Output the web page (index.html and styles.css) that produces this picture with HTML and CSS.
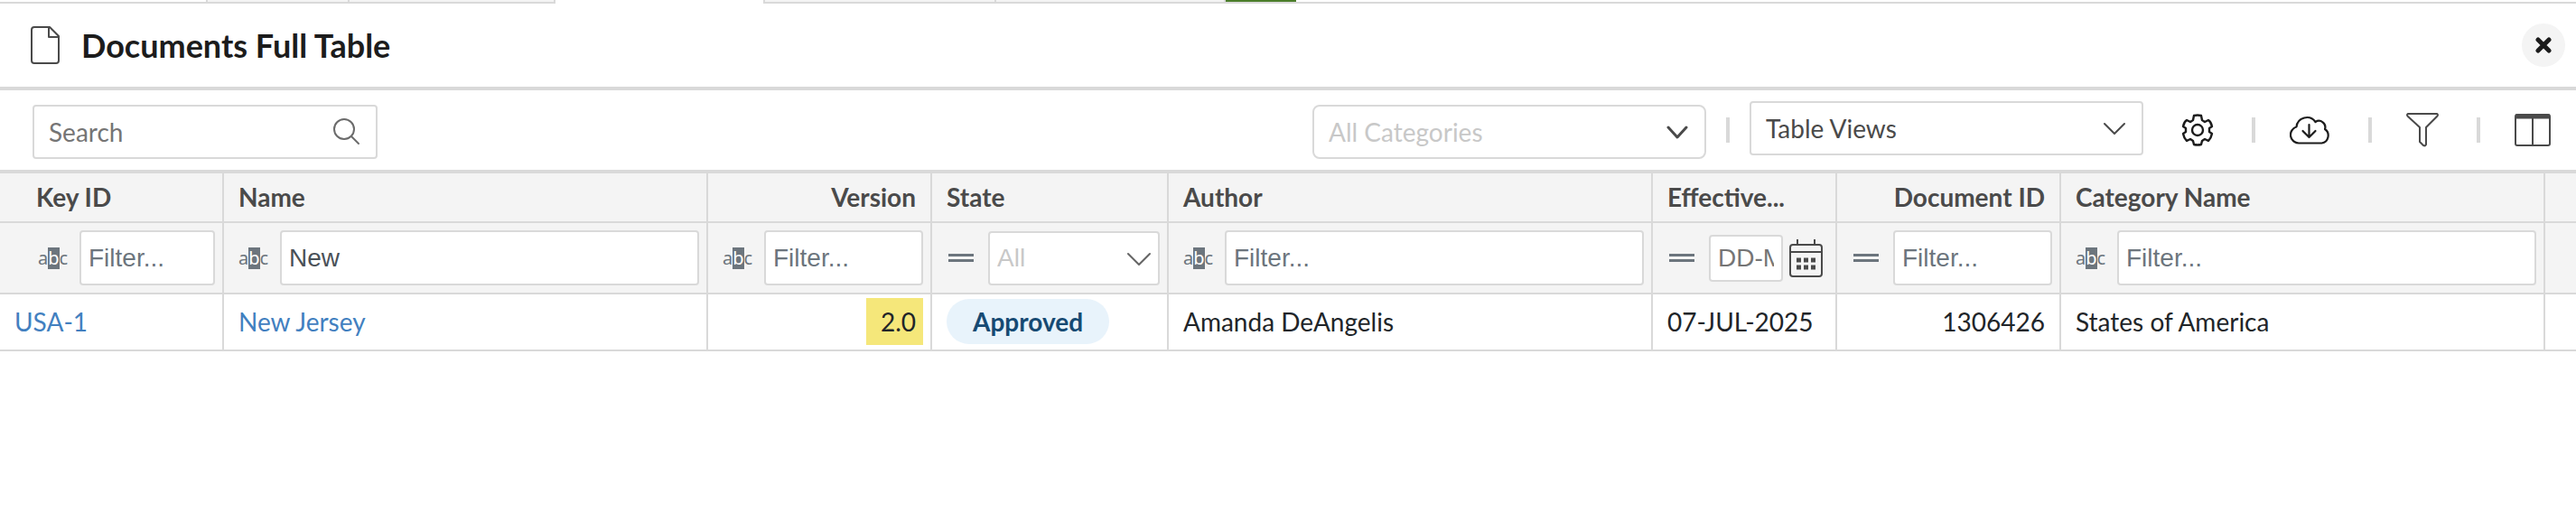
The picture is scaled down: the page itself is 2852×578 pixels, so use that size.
FILE: index.html
```html
<!DOCTYPE html>
<html lang="en">
<head>
  <meta charset="UTF-8">
  <title>Documents Full Table</title>
  <meta name="viewport" content="width=device-width, initial-scale=1.0">
  <link rel="stylesheet" href="styles.css">
</head>
<body>

  <!-- Bottom edge of the tab strip -->
  <div class="tab-strip">
    <div class="tab-gap tab-gap-start"></div>
    <div class="tab tab-sm"></div>
    <div class="tab tab-md tab-last"></div>
    <div class="tab-active"></div>
    <div class="tab tab-lg"></div>
    <div class="tab tab-lg tab-last"></div>
    <div class="tab-add"></div>
    <div class="tab-gap tab-gap-end"></div>
  </div>

  <!-- Page header -->
  <header class="page-header">
    <svg class="doc-icon" width="32" height="42" viewBox="0 0 32 42" fill="none" stroke="#4a4a4a" stroke-width="2" stroke-linejoin="round">
      <path d="M4 1H21L31 11V38Q31 41 28 41H4Q1 41 1 38V4Q1 1 4 1Z"/>
      <path d="M20 1V12H31"/>
    </svg>
    <h1>Documents Full Table</h1>
    <button class="close-btn" aria-label="Close">
      <svg width="18" height="18" viewBox="0 0 18 18" stroke="#1c1c1c" stroke-width="5" stroke-linecap="round">
        <path d="M3 3L15 15M15 3L3 15"/>
      </svg>
    </button>
  </header>

  <!-- Toolbar -->
  <div class="toolbar">
    <div class="search">
      <input type="text" placeholder="Search" aria-label="Search">
      <svg width="30" height="30" viewBox="0 0 30 30" fill="none" stroke="#6b6b6b" stroke-width="2" stroke-linecap="round">
        <circle cx="12" cy="12" r="11"/>
        <path d="M20 20L28 28"/>
      </svg>
    </div>

    <div class="views">
      <div class="select-wrap category-select">
        <select aria-label="Category">
          <option>All Categories</option>
        </select>
        <svg width="24" height="15" viewBox="0 0 24 15" fill="none" stroke="#4a4a4a" stroke-width="3" stroke-linecap="round" stroke-linejoin="round">
          <path d="M2 2L12 13L22 2"/>
        </svg>
      </div>
      <span class="sep"></span>
      <div class="select-wrap view-select">
        <select aria-label="Table view">
          <option>Table Views</option>
        </select>
        <svg width="24" height="15" viewBox="0 0 24 15" fill="none" stroke="#4a4a4a" stroke-width="2" stroke-linecap="round" stroke-linejoin="round">
          <path d="M1 2L12 13L23 2"/>
        </svg>
      </div>
    </div>

    <div class="actions">
      <button class="icon-btn settings-btn" aria-label="Settings">
        <svg width="36" height="36" viewBox="0 0 36 36" fill="none" stroke="#1c1c1c" stroke-width="2.4" stroke-linejoin="round">
          <path d="M14 2Q18 1 22 2L23 7L26 9L30 7Q33 9 34 14L31 16V20L34 22Q33 27 30 30L26 28L23 30L22 34Q18 35 14 34L13 30L10 28L6 30Q3 27 2 22L5 20V16L2 14Q3 9 6 7L10 9L13 7Z"/>
          <circle cx="18" cy="18" r="6"/>
        </svg>
      </button>
      <span class="sep"></span>
      <button class="icon-btn download-btn" aria-label="Download">
        <svg width="45" height="32" viewBox="0 0 45 32" fill="none" stroke="#1c1c1c" stroke-width="2.2" stroke-linecap="round" stroke-linejoin="round">
          <path d="M10 30.5A9.2 9.2 0 0 1 7.5 12.5A11.6 11.6 0 0 1 28.5 7A7 7 0 0 1 39 15A8.6 8.6 0 0 1 35.5 30.5Z"/>
          <path d="M21.5 10V24M14.5 17L21.5 24L28.5 17"/>
        </svg>
      </button>
      <span class="sep"></span>
      <button class="icon-btn filter-btn" aria-label="Filter">
        <svg width="36" height="38" viewBox="0 0 36 38" fill="none" stroke="#4a4a4a" stroke-width="2" stroke-linejoin="round">
          <path d="M2 1H34Q36 2 34 4L22 16V35Q21 37 19 36L15 32V16L2 4Q0 2 2 1Z"/>
        </svg>
      </button>
      <span class="sep"></span>
      <button class="icon-btn columns-btn" aria-label="Choose columns">
        <svg width="40" height="36" viewBox="0 0 40 36" fill="none" stroke="#4a4a4a" stroke-width="2">
          <rect x="1" y="1" width="38" height="34" rx="2"/>
          <path d="M1 3H39" stroke-width="5"/>
          <path d="M20 4V35"/>
        </svg>
      </button>
    </div>
  </div>

  <!-- Documents grid -->
  <table class="grid">
    <colgroup>
      <col class="col-md">
      <col class="col-lg">
      <col class="col-md">
      <col class="col-state">
      <col class="col-lg">
      <col class="col-date">
      <col class="col-md">
      <col class="col-lg">
      <col>
    </colgroup>
    <thead>
      <tr class="head-row">
        <th class="first">Key ID</th>
        <th>Name</th>
        <th class="num">Version</th>
        <th>State</th>
        <th>Author</th>
        <th>Effective...</th>
        <th class="num">Document ID</th>
        <th>Category Name</th>
        <th></th>
      </tr>
      <tr class="filter-row">
        <td class="first">
          <div class="filter">
            <span class="abc" aria-hidden="true">a<b>b</b>c</span>
            <input type="text" placeholder="Filter..." aria-label="Filter Key ID">
          </div>
        </td>
        <td>
          <div class="filter">
            <span class="abc" aria-hidden="true">a<b>b</b>c</span>
            <input type="text" value="New" aria-label="Filter Name">
          </div>
        </td>
        <td>
          <div class="filter">
            <span class="abc" aria-hidden="true">a<b>b</b>c</span>
            <input type="text" placeholder="Filter..." aria-label="Filter Version">
          </div>
        </td>
        <td>
          <div class="filter">
            <span class="equals" aria-hidden="true"></span>
            <div class="select-wrap state-select">
              <select aria-label="Filter State">
                <option>All</option>
              </select>
              <svg width="26" height="16" viewBox="0 0 26 16" fill="none" stroke="#666" stroke-width="2" stroke-linecap="round" stroke-linejoin="round">
                <path d="M1 2L13 14L25 2"/>
              </svg>
            </div>
          </div>
        </td>
        <td>
          <div class="filter">
            <span class="abc" aria-hidden="true">a<b>b</b>c</span>
            <input type="text" placeholder="Filter..." aria-label="Filter Author">
          </div>
        </td>
        <td>
          <div class="filter date-filter">
            <span class="equals" aria-hidden="true"></span>
            <input type="text" placeholder="DD-MMM-YYYY" aria-label="Filter Effective Date">
            <button class="calendar-btn" aria-label="Open calendar">
              <svg width="38" height="42" viewBox="0 0 38 42" fill="none" stroke="#4a4a4a" stroke-width="2">
                <rect x="1" y="6" width="35" height="35" rx="3"/>
                <path d="M1 14H36M9 0V6M28 0V6"/>
                <path d="M8 23H13M16 23H21M24 23H29M8 31H13M16 31H21M24 31H29" stroke-width="5"/>
              </svg>
            </button>
          </div>
        </td>
        <td>
          <div class="filter">
            <span class="equals" aria-hidden="true"></span>
            <input type="text" placeholder="Filter..." aria-label="Filter Document ID">
          </div>
        </td>
        <td>
          <div class="filter">
            <span class="abc" aria-hidden="true">a<b>b</b>c</span>
            <input type="text" placeholder="Filter..." aria-label="Filter Category Name">
          </div>
        </td>
        <td></td>
      </tr>
    </thead>
    <tbody>
      <tr>
        <td><a href="#">USA-1</a></td>
        <td><a href="#">New Jersey</a></td>
        <td class="num version"><span class="highlight">2.0</span></td>
        <td><span class="badge">Approved</span></td>
        <td>Amanda DeAngelis</td>
        <td>07-JUL-2025</td>
        <td class="num">1306426</td>
        <td>States of America</td>
        <td></td>
      </tr>
    </tbody>
  </table>

</body>
</html>
```
FILE: styles.css
```css
* {
  box-sizing: border-box;
}

body {
  margin: 0;
  background: #fff;
  color: #212529;
  font-family: Lato, sans-serif;
  font-size: 28px;
}

svg {
  display: block;
}

input,
select,
button {
  margin: 0;
  font-family: inherit;
  font-size: 28px;
}

button {
  padding: 0;
  border: 0;
  background: none;
  cursor: pointer;
}

input::placeholder {
  color: #757575;
  opacity: 1;
}

/* tab strip */
.tab-strip {
  display: flex;
  height: 4px;
}
.tab,
.tab-gap,
.tab-add {
  border-bottom: 2px solid #d9d9d9;
}
.tab {
  background: #f4f4f4;
  border-left: 2px solid #d9d9d9;
}
.tab-last {
  border-right: 2px solid #d9d9d9;
}
.tab-sm { width: 157px; }
.tab-md { width: 230px; }
.tab-lg { width: 256px; }
.tab-active { width: 230px; }
.tab-gap-start { width: 228px; }
.tab-gap-end { flex: 1; }
.tab-add {
  width: 78px;
  background: #4b7d2a;
}

/* page header */
.page-header {
  display: flex;
  align-items: center;
  height: 96px;
  padding: 0 12px 0 34px;
  border-bottom: 4px solid #d9d9d9;
}
.page-header h1 {
  flex: 1;
  margin: 0 0 0 24px;
  color: #1c1c1c;
  font-size: 36px;
  font-weight: bold;
}
.close-btn {
  display: flex;
  align-items: center;
  justify-content: center;
  width: 48px;
  height: 48px;
  border-radius: 50%;
  background: #f4f4f4;
}

/* toolbar */
.toolbar {
  display: flex;
  align-items: center;
  padding: 12px 28px 12px 36px;
  border-bottom: 4px solid #d9d9d9;
}
.search {
  position: relative;
  align-self: flex-end;
  width: 382px;
  margin-right: auto;
}
.search input {
  display: block;
  width: 100%;
  height: 60px;
  padding: 0 60px 0 16px;
  border: 2px solid #d9d9d9;
  border-radius: 4px;
}
.search svg {
  position: absolute;
  top: 15px;
  right: 19px;
}
.views {
  display: flex;
  align-items: center;
  gap: 22px;
  height: 64px;
  margin-right: 38px;
}
.sep {
  width: 4px;
  height: 28px;
  background: #d9d9d9;
}
.actions {
  display: flex;
  align-items: center;
  gap: 38px;
}
.icon-btn {
  display: flex;
  align-items: center;
}
.settings-btn {
  justify-content: center;
  width: 44px;
}
.download-btn { width: 49px; }
.filter-btn { width: 40px; }

/* drop-downs */
.select-wrap {
  position: relative;
}
.select-wrap select {
  display: block;
  appearance: none;
  width: 100%;
  height: 60px;
  padding: 0 60px 0 16px;
  border: 2px solid #d9d9d9;
  border-radius: 4px;
  background: #fff;
  color: #4a4a4a;
}
.select-wrap svg {
  position: absolute;
  top: 23px;
  right: 20px;
  pointer-events: none;
}
.category-select {
  align-self: flex-end;
  width: 436px;
}
.category-select select {
  border-radius: 8px;
  color: #c8c8c8;
}
.view-select {
  align-self: flex-start;
  width: 436px;
}

/* grid */
.grid {
  width: 100%;
  table-layout: fixed;
  border-spacing: 0;
}
.col-md { width: 248px; }
.col-lg { width: 536px; }
.col-state { width: 262px; }
.col-date { width: 204px; }

.grid th,
.grid td {
  height: 63px;
  padding: 0 16px 2px;
  border-right: 2px solid #d9d9d9;
  border-bottom: 2px solid #d9d9d9;
  text-align: left;
  white-space: nowrap;
}
.grid th:last-child,
.grid td:last-child {
  border-right: 0;
}
.grid thead {
  background: #f4f4f4;
}
.grid .head-row th {
  height: 55px;
  color: #4a4a4a;
}
.grid .num {
  text-align: right;
}
.grid .filter-row td {
  padding: 8px 8px 8px 16px;
}
.grid .head-row .first {
  padding-left: 40px;
}
.grid .filter-row .first {
  padding-left: 42px;
}
.grid a {
  color: #4280c0;
  text-decoration: none;
}

/* filter cells */
.filter {
  display: flex;
  align-items: center;
}
.filter input,
.filter select {
  font-family: "Liberation Sans", Arial, sans-serif;
}
.filter input {
  flex: 1;
  min-width: 0;
  height: 61px;
  padding: 0 8px;
  border: 2px solid #d9d9d9;
  border-radius: 4px;
  background: #fff;
  color: #495057;
}
.filter input::placeholder {
  color: #6c757d;
}
.abc {
  display: flex;
  width: 32px;
  margin-right: 14px;
  color: #6c757d;
  font-family: "Noto Sans", sans-serif;
  font-size: 20px;
  line-height: 24px;
}
.abc b {
  width: 13px;
  background: #6c757d;
  color: #fff;
  font-weight: normal;
  text-align: center;
}
.equals {
  width: 28px;
  height: 9px;
  margin: 0 16px 0 2px;
  border-top: 3px solid #6c757d;
  border-bottom: 3px solid #6c757d;
}
.state-select {
  flex: 1;
}
.filter .state-select select {
  padding: 0 40px 0 8px;
  color: #c8c8c8;
}
.state-select svg {
  right: 10px;
}
.filter.date-filter input {
  height: 52px;
}
.filter.date-filter input::placeholder {
  color: #757575;
}
.calendar-btn {
  margin: 0 5px 0 7px;
}

/* row content */
.grid .version {
  padding-right: 8px;
}
.highlight {
  display: inline-block;
  padding: 0 8px 0 16px;
  background: #f5e77a;
  line-height: 52px;
  vertical-align: middle;
}
.badge {
  display: inline-block;
  padding: 0 29px;
  border-radius: 25px;
  background: #e8f3fb;
  color: #164a73;
  font-weight: bold;
  line-height: 50px;
  vertical-align: middle;
}
```
